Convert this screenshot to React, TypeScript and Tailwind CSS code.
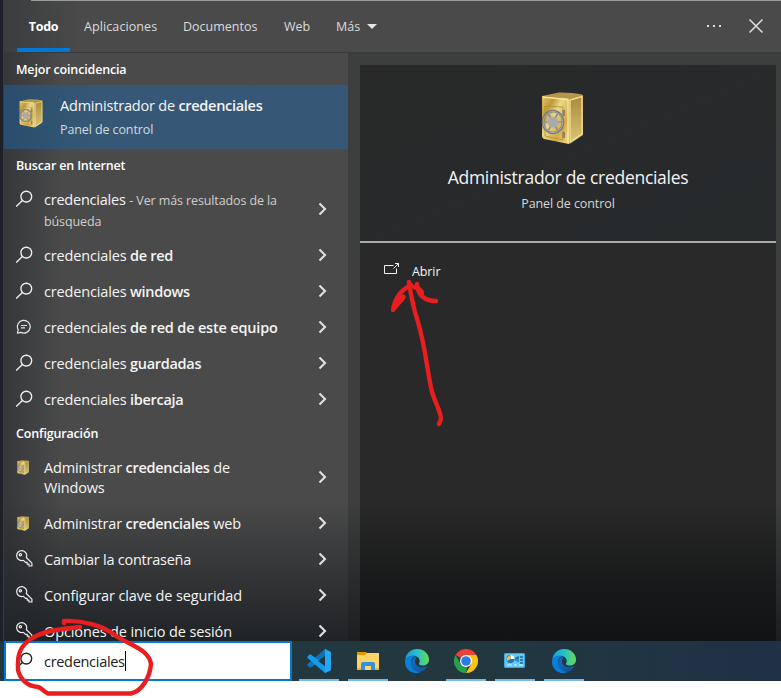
import type { ReactNode } from 'react';

function Safe({ id, className }: { id: string; className: string }) {
  return (
    <svg viewBox="0 0 43 53" className={className} preserveAspectRatio="none">
      <defs>
        <linearGradient id={id + 'f'} x1="0" y1="0" x2="1" y2="1">
          <stop offset="0" stopColor="#e3c86a" />
          <stop offset=".25" stopColor="#c09a3a" />
          <stop offset=".42" stopColor="#ecd98a" />
          <stop offset=".7" stopColor="#d2ab45" />
          <stop offset="1" stopColor="#f4e08c" />
        </linearGradient>
        <linearGradient id={id + 's'} x1="0" y1="0" x2="0" y2="1">
          <stop offset="0" stopColor="#a9893c" />
          <stop offset="1" stopColor="#dcc577" />
        </linearGradient>
      </defs>
      <path d="M1 4 18 .5Q32 .3 41 2.5L42 4 28 7Z" fill="#b7964a" />
      <path d="M1 4 28 6.5V52L23 51 3 47Q1 46 1 44Z" fill={'url(#' + id + 'f)'} />
      <path d="M27.5 6.5 42 3V43L28.5 52Z" fill={'url(#' + id + 's)'} />
      <path d="M29 8 41 4.5V42L29 50Z" fill="none" stroke="#f0dc8c" strokeWidth="1.4" />
      <path d="M2 5 27 7.5V51" fill="none" stroke="#f8e9a0" strokeWidth="1.3" />
      <path d="M4 14 22 15V48L4 44Z" fill="none" stroke="#b08d35" strokeWidth=".8" />
      <path d="M22.7 18v6M22.7 40v6" stroke="#8b8366" strokeWidth="2.5" />
      <ellipse cx="12" cy="30" rx="10" ry="11" fill="none" stroke="#77777c" strokeWidth="2.5" />
      <ellipse cx="12" cy="30" rx="9.7" ry="10.7" fill="none" stroke="#b8b8bc" strokeWidth=".8" />
      <path d="M2 30h20M7 21l10 18M17 21 7 39" stroke="#8f9094" strokeWidth="1.7" />
      <circle cx="12" cy="30" r="5.5" fill="#aaaaac" />
    </svg>
  );
}

function SearchIcon({ dark = false }: { dark?: boolean }) {
  return (
    <svg viewBox="0 0 18 18" className={'size-[18px] ' + (dark ? 'text-[#222]' : 'text-[#f0f0f0]')} fill="none" stroke="currentColor" strokeWidth="1.35">
      <circle cx="10.3" cy="6.6" r="5.4" />
      <path d="M6.4 10.4.2 16.6" />
    </svg>
  );
}

function ChatIcon() {
  return (
    <svg viewBox="0 0 18 18" className="size-[18px]" fill="none" stroke="#e6e6e6" strokeWidth="1.2">
      <path d="M1.4 15.100 2.2 11.800A6.4 6.4 0 1 1 4.9 14.400Z" strokeLinejoin="round" />
      <path d="M5 7.500h6M5 9.900h4" />
    </svg>
  );
}

function KeyIcon() {
  return (
    <svg viewBox="0 0 18 18" className="size-[18px]" fill="none" stroke="#ededed" strokeWidth="1.2" strokeLinejoin="round">
      <path d="M10.3 7.500 15.9 13.100V16H13V14.200H11.2V12.400H9.5L7.4 10.300A5 5 0 1 1 10.3 7.500Z" />
      <circle cx="4.4" cy="4.7" r="1.1" />
    </svg>
  );
}

function Chevron() {
  return (
    <svg viewBox="0 0 10 14" className="h-3.5 w-2.5 shrink-0" fill="none" stroke="#e0e0e0" strokeWidth="2.1">
      <path d="m1.5 1.5 5.5 5.5L1.5 12.5" />
    </svg>
  );
}

function Row({ icon, children, tall = false }: { icon: ReactNode; children: ReactNode; tall?: boolean }) {
  return (
    <div className={'flex shrink-0 pl-3 pr-5 ' + (tall ? 'h-14' : 'h-9')}>
      <div className="w-7 shrink-0 pt-[9px]">{icon}</div>
      <div className="flex-1 whitespace-nowrap pt-[9px] text-[14.5px] leading-5 tracking-[-0.16px]">{children}</div>
      <div className="flex items-center">
        <Chevron />
      </div>
    </div>
  );
}

function Strong({ children }: { children: ReactNode }) {
  return <b className="font-semibold tracking-[-0.29px]">{children}</b>;
}

function Heading({ children }: { children: ReactNode }) {
  return <h2 className="flex h-8 shrink-0 items-center pl-3 pt-0.5 text-[12.5px] font-semibold tracking-[-0.16px] text-white">{children}</h2>;
}

function Code() {
  return (
    <svg viewBox="0 0 24 24" className="size-6">
      <path d="M18 0 24 3 4 18.5 2.5 18.5.3 16.3Q0 15.7.5 15Z" fill="#0875bd" />
      <path d="M.3 7.7 2.5 5.5 4 5.5 24 21 18 24 .5 9Z" fill="#119bec" />
      <path d="M18 0 24 3v18l-6 3Z" fill="#25a7f3" />
      <path d="m18 6.8-7 5.2 7 5.2Z" fill="#213840" />
    </svg>
  );
}

function Folder() {
  return (
    <svg viewBox="0 0 24 24" className="size-6">
      <path d="M1 3h9l2 2v4H1Z" fill="#e09a00" />
      <path d="M1 6h8l2-2h12v17H1Z" fill="#ffd467" />
      <path d="M5 21v-6q0-2 2-2h10q2 0 2 2v6h-4v-4H9v4Z" fill="#3390df" />
      <path d="M1 19h4v2H1ZM19 19h4v2h-4Z" fill="#f0b43c" />
    </svg>
  );
}

function Edge({ id }: { id: string }) {
  return (
    <svg viewBox="0 0 24 24" className="size-6">
      <defs>
        <linearGradient id={id + 'a'} x1="0" y1=".5" x2="1" y2=".5">
          <stop stopColor="#199bdd" />
          <stop offset=".5" stopColor="#28bfcb" />
          <stop offset="1" stopColor="#65dc51" />
        </linearGradient>
        <linearGradient id={id + 'b'} x1="0" y1="0" x2="1" y2="1">
          <stop stopColor="#1272c4" />
          <stop offset="1" stopColor="#125299" />
        </linearGradient>
      </defs>
      <path d="M.2 11C1 4 6 0 12 0c7 0 12 5 12 10.5 0 4-3 6-6.5 6-3 0-4-1.2-3.5-2 1.5-1.8 1-6.5-4-7.5C6 6.2 2 8 .2 11Z" fill={'url(#' + id + 'a)'} />
      <path d="M.1 11C2 7 7 5.8 10.5 7.2 7 8 5 12 6.5 16c1.3 4 5 6.5 9 7.2C8 26-1 21 .1 11Z" fill="#087fd9" />
      <path d="M10.5 8C5 10 5 17 8.5 20.5c4 4 10 3 13.500-2.500.5-.8 0-1-.5-.7-5 2.400-11 .2-11.500-4.300-.2-2 .7-3.600 1.500-4.500Z" fill={'url(#' + id + 'b)'} />
    </svg>
  );
}

function Chrome() {
  return (
    <svg viewBox="0 0 24 24" className="size-6">
      <path d="M12 12 1.6 6A12 12 0 0 1 22.4 6Z" fill="#ea4335" />
      <path d="M12 6H22.4A12 12 0 0 1 12 24L17.2 15Z" fill="#fbc116" />
      <path d="M1.6 6 6.8 15Q9 19 13.5 17.5L12 24A12 12 0 0 1 1.6 6Z" fill="#29a14c" />
      <circle cx="12" cy="12" r="6" fill="#fff" />
      <circle cx="12" cy="12" r="4.8" fill="#3079ed" />
    </svg>
  );
}

function ControlPanel() {
  return (
    <svg viewBox="0 0 24 24" className="size-6">
      <rect x="1.5" y="4.5" width="20" height="14" rx=".8" fill="#65c9f3" stroke="#3fa8df" />
      <circle cx="7.5" cy="10" r="4" fill="#1579bd" />
      <path d="M7.5 6v4h4A4 4 0 0 0 7.5 6Z" fill="#fff" />
      <path d="M7.5 10V6.5A3.5 3.5 0 0 0 4.5 12Z" fill="#f7b93d" />
      <path d="M13 12V9h2M15 13V8h1M17 8h3M17 11h3M17 14h3" stroke="#126b9f" strokeWidth="1.3" fill="none" />
      <path d="M4 16h5M11 16h3M16 16h4" stroke="#d9f7ff" strokeWidth="1.2" />
    </svg>
  );
}

function Task({ children, active = true }: { children: ReactNode; active?: boolean }) {
  return (
    <div className="flex h-10 w-10 flex-col items-center justify-between pt-2">
      {children}
      <div className={'h-0.5 w-full ' + (active ? 'bg-[#76b9ed]' : '')} />
    </div>
  );
}

export default function App() {
  return (
    <div className="relative flex h-[698px] w-[781px] flex-col overflow-hidden bg-white font-['Open_Sans',sans-serif] text-[#f4f4f4]">
      <div className="flex h-[641px] bg-[#1d2029] pl-[3px]">
        <div className="flex w-[778px] flex-col border-l border-[#393c40] bg-[#484a49]">
          <header className="flex h-[53px] shrink-0 flex-col border-b border-[#3a3c3c] bg-linear-to-r from-[#3b3d3e] to-[#4a4a4a] to-10%">
            <div className="ml-[27px] h-px shrink-0 bg-[#999c9b]" />
            <div className="flex flex-1 items-stretch whitespace-nowrap text-[12.5px] text-[#dcdcdc]">
              <div className="ml-[13px] flex w-[53px] flex-col items-center justify-between font-bold text-white">
                <span className="pt-4 leading-5 tracking-[-0.25px]">Todo</span>
                <span className="h-1 w-full bg-[#0078d7]" />
              </div>
              <span className="ml-3.5 w-[99px] pt-4 leading-5 tracking-[0.1px]">Aplicaciones</span>
              <span className="w-[101px] pt-4 leading-5">Documentos</span>
              <span className="w-[52px] pt-4 leading-5">Web</span>
              <span className="w-[31px] pt-4 leading-5">Más</span>
              <svg viewBox="0 0 10 5" className="mt-[23px] h-[5px] w-2.5"><path d="M0 0h10L5 5Z" fill="#e7e7e7" /></svg>
              <svg viewBox="0 0 16 16" className="ml-auto mt-[17px] size-4" fill="#dedede"><path d="M1 7h2v2H1ZM7 7h2v2H7ZM13 7h2v2h-2Z" /></svg>
              <svg viewBox="0 0 16 16" className="ml-[26px] mr-[17px] mt-[17px] size-4" stroke="#e0e0e0" strokeWidth="1.5"><path d="m1.5 1.5 13 13m0-13-13 13" /></svg>
            </div>
          </header>
          <div className="flex min-h-0 flex-1">
            <main className="w-[344px] overflow-hidden bg-linear-to-b from-[#4a4a4a] from-76% via-[#2f3133] via-91% to-[#202326]">
              <div className="flex h-full flex-col bg-linear-to-r from-[#20242a]/50 to-transparent to-17%">
                <Heading>Mejor coincidencia</Heading>
                <div className="flex h-16 shrink-0 bg-linear-to-r from-[#2a4d6d] to-[#365876] to-25% pl-[15px]">
                  <Safe id="best" className="mt-3.5 h-[29px] w-6" />
                  <div className="ml-[17px] whitespace-nowrap">
                    <div className="mt-[11px] text-[14.5px] leading-5 tracking-[-0.2px]">Administrador de <Strong>credenciales</Strong></div>
                    <div className="mt-1 text-[12.5px] leading-5 tracking-[-0.1px] text-[#d0dae2]">Panel de control</div>
                  </div>
                </div>
                <Heading>Buscar en Internet</Heading>
                <Row tall icon={<SearchIcon />}>
                  <span className="tracking-[-0.22px]">credenciales</span>{' '}
                  <span className="text-[12.5px] tracking-[-0.11px] text-[#cfcfcf]">- Ver más resultados de la<br />búsqueda</span>
                </Row>
                <Row icon={<SearchIcon />}>credenciales <Strong>de red</Strong></Row>
                <Row icon={<SearchIcon />}>credenciales <Strong>windows</Strong></Row>
                <Row icon={<ChatIcon />}>credenciales <b className="font-semibold tracking-[-0.18px]">de red de este equipo</b></Row>
                <Row icon={<SearchIcon />}>credenciales <Strong>guardadas</Strong></Row>
                <Row icon={<SearchIcon />}>credenciales <Strong>ibercaja</Strong></Row>
                <Heading>Configuración</Heading>
                <Row tall icon={<Safe id="windows" className="ml-[1px] mt-0.5 h-[15px] w-3" />}>Administrar <Strong>credenciales</Strong> de<br />Windows</Row>
                <Row icon={<Safe id="web" className="ml-[1px] mt-0.5 h-[15px] w-3" />}>Administrar <Strong>credenciales</Strong> web</Row>
                <Row icon={<KeyIcon />}><span className="tracking-[-0.24px]">Cambiar la contraseña</span></Row>
                <Row icon={<KeyIcon />}><span className="tracking-[-0.12px]">Configurar clave de seguridad</span></Row>
                <Row icon={<KeyIcon />}><span className="tracking-[-0.12px]">Opciones de inicio de sesión</span></Row>
              </div>
            </main>
            <aside className="flex flex-1 bg-linear-to-b from-[#3d3e3e] from-76% to-[#1c1e20] pl-3 pr-[5px] pt-3">
              <div className="flex flex-1 flex-col bg-linear-to-b from-[#292929] from-76% via-[#171819] via-91% to-[#121315]">
                <div className="flex h-[178px] shrink-0 flex-col items-center border-b-2 border-[#aaa] bg-linear-to-br from-[#292929] to-[#262a2c] pt-[27px]">
                  <Safe id="detail" className="mr-3 h-[53px] w-[43px]" />
                  <h1 className="mt-5 whitespace-nowrap text-[17.5px] leading-6 tracking-[-0.28px]">Administrador de credenciales</h1>
                  <p className="mt-[5px] text-[12.5px] leading-5 tracking-[-0.08px] text-[#d6d6d6]">Panel de control</p>
                </div>
                <div className="flex pl-6 pt-[19px]">
                  <svg viewBox="0 0 16 12" className="mt-px h-3 w-4" fill="none" stroke="#f2f2f2">
                    <path d="M9.5 2.5H.5v8h12v-5M9.5 5.500l5-5M11 .5h3.500v3.500" />
                  </svg>
                  <span className="ml-3 text-[12.5px] leading-5 tracking-[-0.1px]">Abrir</span>
                </div>
              </div>
            </aside>
          </div>
        </div>
      </div>
      <footer className="flex h-10 bg-linear-to-r from-[#22383e] from-60% to-[#203047] pl-1">
        <div className="flex w-72 border-2 border-[#0078d7] bg-white pl-2.5 text-[#202020]">
          <div className="w-7 pt-[9px]"><SearchIcon dark /></div>
          <span className="pt-[9px] text-[14.5px] leading-5 tracking-[-0.3px]">credenciales</span>
          <span className="mt-2 h-5 w-px bg-black" />
        </div>
        <div className="ml-[7px] flex gap-[9px]">
          <Task><Code /></Task>
          <Task><Folder /></Task>
          <Task active={false}><Edge id="first" /></Task>
          <Task><Chrome /></Task>
          <Task><ControlPanel /></Task>
          <Task><Edge id="second" /></Task>
        </div>
      </footer>
      <svg viewBox="0 0 781 698" className="pointer-events-none absolute inset-0 size-full" fill="none" stroke="#e91e1e" strokeWidth="4.4" strokeLinecap="round" strokeLinejoin="round">
        <path d="M409 282C411 296 413 307 418 322C426 349 427 371 432 392C436 405 441 412 441 419L439 424" />
        <path d="M411 285C401 290 395 297 393 310C399 302 407 295 402 297C397 300 396 304 394 309" />
        <path d="M414 287C419 288 421 290 422 293M417 284C418 294 423 301 436 301" />
        <path d="M64 623V621C83 620 104 626 116 636C132 646 149 650 151 664C150 677 142 691 131 693.500H48C41 690 42 688 38 687C27 686 20 679 18 670C17 655 20 646 31 639C44 630 63 629 80 627" />
      </svg>
    </div>
  );
}
